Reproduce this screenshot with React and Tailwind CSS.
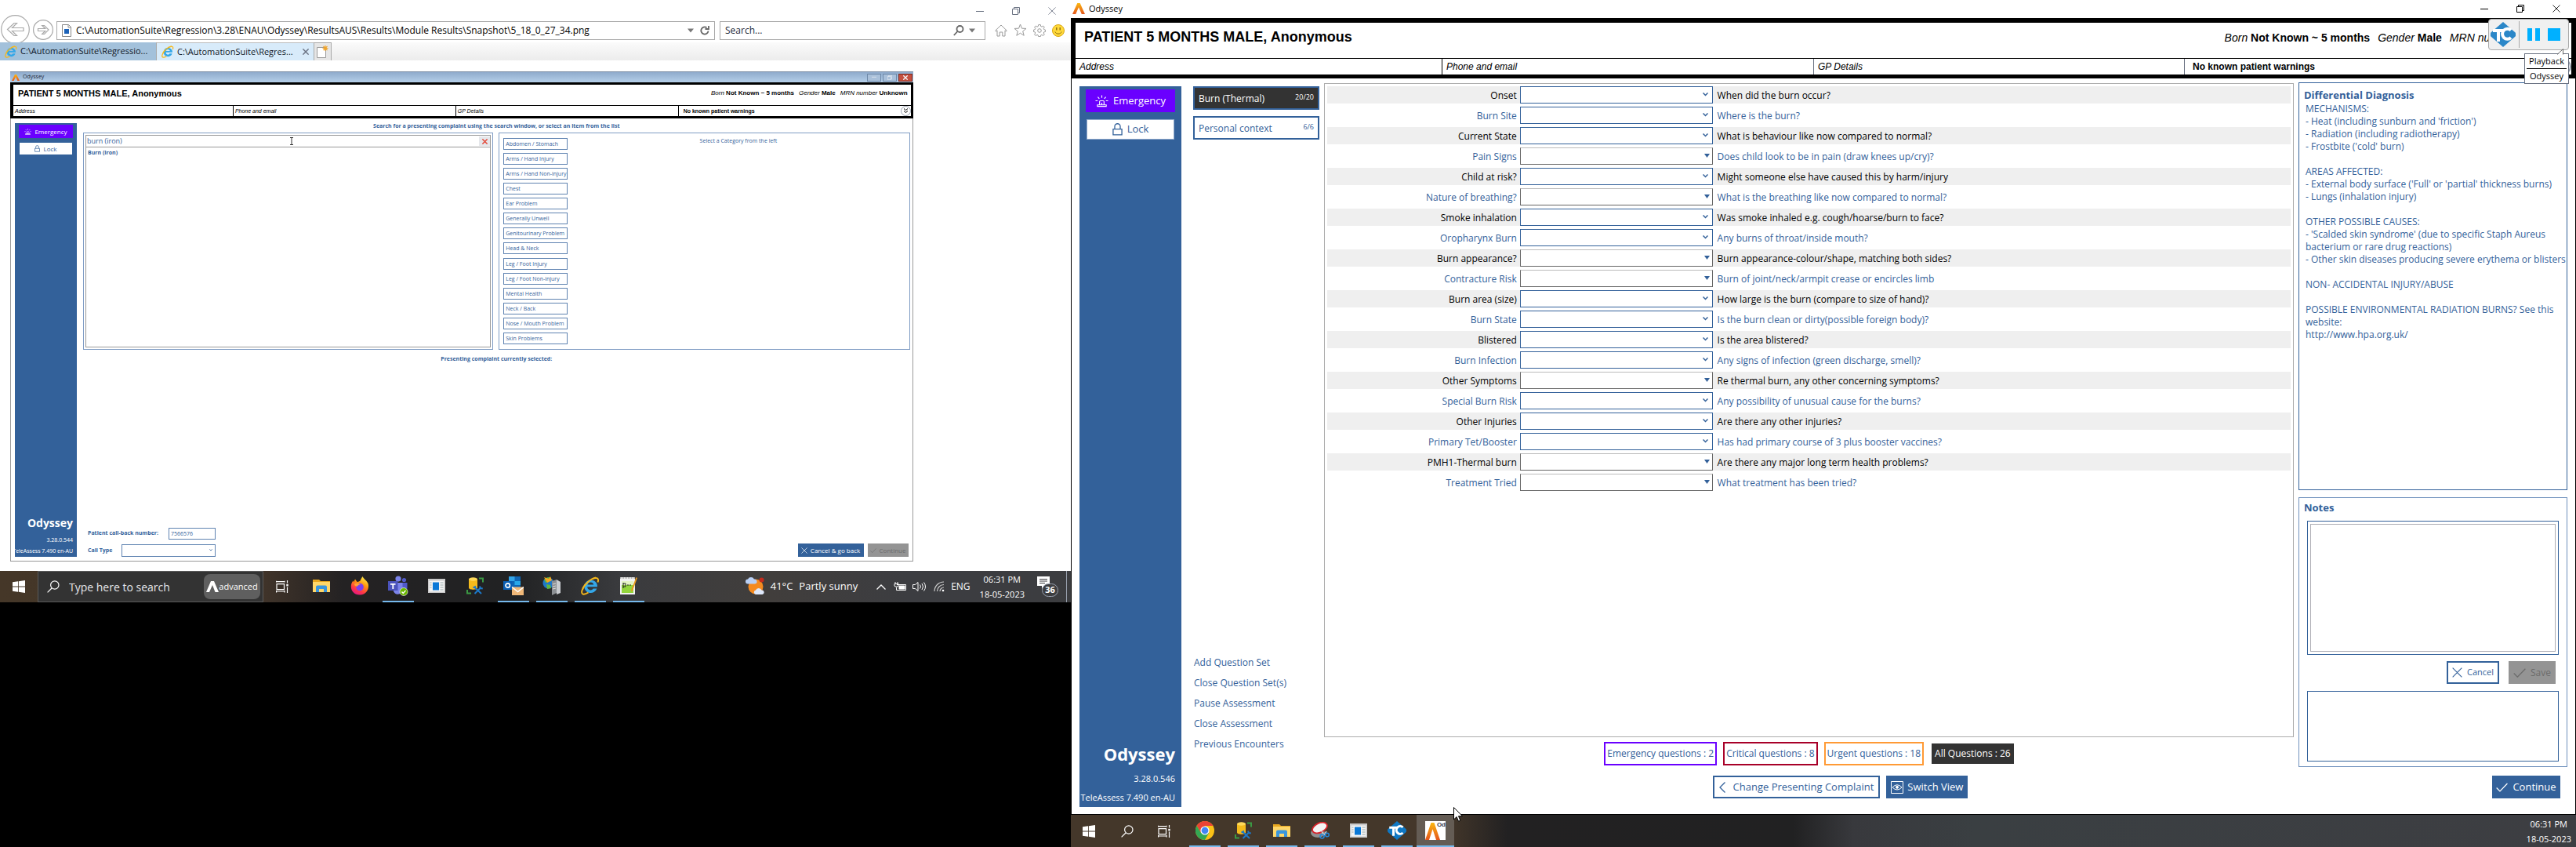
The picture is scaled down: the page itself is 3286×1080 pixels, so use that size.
import React from "react";

const UI = "font-['Open_Sans','Noto_Sans',sans-serif]";
const ARIAL = "font-['Liberation_Sans',Arial,sans-serif]";

/* ---------- icons ---------- */
function Flame({ className }) {
  return (
    <svg className={className} viewBox="0 0 16 14" preserveAspectRatio="none" aria-hidden="true">
      <defs>
        <linearGradient id="flame" x1="0" y1="0" x2="0" y2="1">
          <stop offset="0" stopColor="#fbb811" />
          <stop offset="1" stopColor="#e4551c" />
        </linearGradient>
      </defs>
      <path d="M6.3 0h3.4L16 14h-4.2L8 5.2 4.2 14H0z" fill="url(#flame)" />
    </svg>
  );
}
function Siren({ className }) {
  return (
    <svg className={className} viewBox="0 0 18 16" fill="none" stroke="currentColor" strokeWidth="1.2" aria-hidden="true">
      <path d="M6 13V8.5a1 1 0 0 1 1-1h4a1 1 0 0 1 1 1V13M3 15v-2h12v2zM9 0v3.5M3.6 2.2l2 2.4M14.4 2.2l-2 2.4M.5 7.5h3M14.5 7.5h3M9 10v3" />
    </svg>
  );
}
function LockIcon({ className }) {
  return (
    <svg className={className} viewBox="0 0 14 17" fill="none" stroke="currentColor" strokeWidth="1.4" aria-hidden="true">
      <path d="M1 8h12v8H1zM3.2 8V4.5a3.8 3.8 0 0 1 7.6 0V8" />
    </svg>
  );
}
function Cross({ className, sw = 1.2 }) {
  return (
    <svg className={className} viewBox="0 0 14 14" fill="none" stroke="currentColor" strokeWidth={sw} aria-hidden="true">
      <path d="M.7.7l12.6 12.6M13.3.7L.7 13.3" />
    </svg>
  );
}
function Tick({ className }) {
  return (
    <svg className={className} viewBox="0 0 16 12" fill="none" stroke="currentColor" strokeWidth="1.3" aria-hidden="true">
      <path d="M.7 6.5l4.6 4.7L15.4.7" />
    </svg>
  );
}
function Minimize({ className }) {
  return (
    <svg className={className} viewBox="0 0 10 10" stroke="currentColor" aria-hidden="true"><path d="M0 5.5h10" /></svg>
  );
}
function Restore({ className }) {
  return (
    <svg className={className} viewBox="0 0 10 10" fill="none" stroke="currentColor" aria-hidden="true">
      <path d="M.5 2.5h7v7h-7zM2.5 2.5v-2h7v7h-2" />
    </svg>
  );
}
function Windows() {
  return (
    <svg className="size-4" viewBox="0 0 16 16" fill="#fff" aria-hidden="true">
      <path d="M0 2.2l7-.9v6.3H0zM7.8 1.2L16 0v7.6H7.8zM0 8.4h7v6.3l-7-.9zM7.8 8.4H16V16l-8.2-1.2z" />
    </svg>
  );
}
function Magnifier() {
  return (
    <svg className="size-4" viewBox="0 0 16 16" fill="none" stroke="#fff" strokeWidth="1.2" aria-hidden="true">
      <circle cx="9.8" cy="6" r="5.2" /><path d="M6 10L.6 15.4" />
    </svg>
  );
}
function TaskView() {
  return (
    <svg className="size-4" viewBox="0 0 16 16" fill="none" stroke="#fff" strokeWidth="1.2" aria-hidden="true">
      <path d="M1 4.6h9.5v7H1zM.6 2.4V.8M.6 1.6h10.4M11 2.4V.8M.6 14h10.4M.6 13v2.4M11 13v2.4M14.5 0v3.5M14.5 8.5V16" />
      <path d="M13.3 4.8h2.4v2.6h-2.4z" fill="#fff" stroke="none" />
    </svg>
  );
}
function FolderIcon() {
  return (
    <svg className="h-5 w-6" viewBox="0 0 24 20" aria-hidden="true">
      <path d="M1 2h8l2 2h12v14H1z" fill="#e9a820" />
      <path d="M1 5h22v13H1z" fill="#ffd76a" />
      <path d="M5 18v-6.5a2 2 0 0 1 2-2h10a2 2 0 0 1 2 2V18h-4v-4H9v4z" fill="#3a96dd" />
    </svg>
  );
}
function FirefoxIcon() {
  return (
    <svg className="size-6" viewBox="0 0 24 24" aria-hidden="true">
      <defs>
        <linearGradient id="ff" x1="0.8" y1="0" x2="0.3" y2="1">
          <stop offset="0" stopColor="#fff44f" /><stop offset=".4" stopColor="#ff980e" />
          <stop offset=".75" stopColor="#ff3647" /><stop offset="1" stopColor="#e31587" />
        </linearGradient>
      </defs>
      <path d="M15.500 0c1 3 5 5 6.800 8.500 2.200 5-.5 15-10.300 15C5 23.500.8 18.500.8 13c0-3.500 1-5.500 2.700-7.500l.7 1.800L6 3.500 8.500 7c2-.2 3-.6 4-1.500C13.500 3.500 14 2 15.500 0z" fill="url(#ff)" />
      <circle cx="12" cy="13.500" r="4.800" fill="#7a3ff0" />
      <path d="M5 9.500c3-1.500 5.500-.5 8 .8-2 0-3.500 1-4.500 2.400-2 0-3.500-1-3.500-3.200z" fill="#ffa436" />
    </svg>
  );
}
function TeamsIcon() {
  return (
    <svg className="size-[26px]" viewBox="0 0 26 26" aria-hidden="true">
      <circle cx="13" cy="4" r="3.600" fill="#7b83eb" /><circle cx="20.500" cy="5.500" r="2.600" fill="#5059c9" />
      <path d="M16 9h8.500v7a5 5 0 0 1-8.500 3z" fill="#5059c9" />
      <path d="M7 9h11.500v9a6 6 0 0 1-11.500 2z" fill="#7b83eb" />
      <path d="M0 7h12.500v12H0z" fill="#4b53bc" /><path d="M3 10h6.500v1.700H7.200V17H5.400v-5.300H3z" fill="#fff" />
      <circle cx="20" cy="20.500" r="5" fill="#6bb700" stroke="#fff" strokeWidth=".6" />
      <path d="M17.500 20.600l1.800 1.900 3.200-3.600" stroke="#fff" strokeWidth="1.400" fill="none" />
    </svg>
  );
}
function AppWindowIcon() {
  return (
    <svg className="h-[18px] w-[22px]" viewBox="0 0 22 18" aria-hidden="true">
      <path d="M0 0h22v18H0z" fill="#c9c9c9" /><path d="M1.500 2.500h19v14h-19z" fill="#f4f4f4" />
      <path d="M6 4.500h8v10H6z" fill="#0a78d7" />
      <path d="M15.500 5h4M15.500 8h4M15.500 11h4M15.500 14h4M2.500 5h2M2.500 8h2M2.500 11h2" stroke="#9aa" />
    </svg>
  );
}
function ToolsIcon() {
  return (
    <svg className="size-[22px]" viewBox="0 0 22 22" aria-hidden="true">
      <path d="M3 2.500v11c0 3 11 3 11 0v-11z" fill="#f4bb1c" /><ellipse cx="8.500" cy="2.500" rx="5.500" ry="2.200" fill="#ffd95a" />
      <path d="M16 1.500h5v5M1 16v4.500h5" fill="none" stroke="#3b9a44" strokeWidth="2" />
      <path d="M10 12.500l9 8.500M18.500 13L10.500 21M8.500 13.500l3.500-2M17 11.500l1 2.500 2.800.5" stroke="#1c78c8" strokeWidth="2" fill="none" />
    </svg>
  );
}
function OutlookIcon() {
  return (
    <svg className="h-6 w-[26px]" viewBox="0 0 26 24" aria-hidden="true">
      <path d="M7 0h15v17H7z" fill="#1066b5" /><path d="M7 0h7.500v6H7z" fill="#32a4e8" /><path d="M14.500 6H22v5h-7.500z" fill="#28a8ea" />
      <path d="M0 6h11.500v11H0z" fill="#0a5fb4" /><circle cx="5.700" cy="11.500" r="2.700" fill="none" stroke="#fff" strokeWidth="1.700" />
      <path d="M11 13.500h15V24H11z" fill="#f0b878" /><path d="M11 13.500l7.500 6 7.500-6" fill="none" stroke="#fff" strokeWidth="1.400" />
    </svg>
  );
}
function ServerIcon() {
  return (
    <svg className="size-6" viewBox="0 0 24 24" aria-hidden="true">
      <circle cx="7.500" cy="8.500" r="7" fill="#1f78c9" /><path d="M2 4c3-3 7-4 9-2l-3 5-4 1zM5 10l5 1 1 4-5 1z" fill="#5fb83b" />
      <path d="M2 1l6 2 2-3 2 5-6 3z" fill="#f6a51f" />
      <path d="M12 6l6-2v17l-6 3z" fill="#8c9094" /><path d="M18 4l5 3v14l-5 2z" fill="#c9ccd0" />
      <path d="M13 10l4-1M13 13l4-1M13 16l4-1" stroke="#ddd" />
    </svg>
  );
}
function IeIcon({ className }) {
  return (
    <svg className={className} viewBox="0 0 24 24" aria-hidden="true">
      <path d="M12.500 4.500a8.300 8.300 0 1 0 7.900 11h-4.700a4 4 0 0 1-7.400-2.200H21c.4-5-3.600-8.800-8.500-8.800zM8.500 10.500a4 4 0 0 1 7.800 0z" fill="#34a7e8" />
      <path d="M21.500 7.500C23.500 2 20 .5 14.500 3.500M5.500 10C.5 16.500-.2 22.500 3.500 22.800c2 .1 4-1 6-2.300M2 17C4 10.500 12.500 2.500 19 1.500" fill="none" stroke="#f5b81c" strokeWidth="1.900" />
    </svg>
  );
}
function NotepadIcon() {
  return (
    <svg className="size-6" viewBox="0 0 24 24" aria-hidden="true">
      <path d="M1 1h19v22H1z" fill="#f2f2f2" /><path d="M3 8h15v13H3z" fill="#93d53c" />
      <path d="M3 6h15v5H3z" fill="#e4f4c4" /><path d="M5 8v7M5 9h3v4H5M10 11h2M13 11h2" stroke="#222" fill="none" />
      <path d="M21.500 1l1.500 1-6 16-2 1.500.2-2.500z" fill="#e79a1d" /><path d="M1 2h19" stroke="#777" strokeDasharray="1 1" />
    </svg>
  );
}
function ChromeIcon() {
  return (
    <svg className="size-6" viewBox="0 0 24 24" aria-hidden="true">
      <circle cx="12" cy="12" r="12" fill="#fbc116" />
      <path d="M1.600 6A12 12 0 0 1 22.400 6H12L7 15z" fill="#ea4335" />
      <path d="M1.600 6A12 12 0 0 0 12 24l5.200-9H7z" fill="#34a853" />
      <circle cx="12" cy="12" r="5.600" fill="#fff" /><circle cx="12" cy="12" r="4.400" fill="#4285f4" />
    </svg>
  );
}
function SnipIcon() {
  return (
    <svg className="h-[22px] w-6" viewBox="0 0 24 22" aria-hidden="true">
      <ellipse cx="9" cy="14" rx="9" ry="6" fill="#8f8f8f" />
      <ellipse cx="11.500" cy="7.500" rx="10" ry="6" transform="rotate(-25 11.500 7.500)" fill="#f4f4f4" stroke="#d8232a" strokeWidth="1.800" />
      <path d="M14 12l3 5M20 12l-3 5" stroke="#ccc" strokeWidth="1.500" />
      <circle cx="14.500" cy="18.500" r="2.500" fill="none" stroke="#2787d8" strokeWidth="1.600" /><circle cx="21" cy="16.500" r="2.300" fill="none" stroke="#2787d8" strokeWidth="1.600" />
    </svg>
  );
}
function TcMark({ className, fill = "#0f78c4" }) {
  return (
    <svg className={className} viewBox="0 0 32 32" aria-hidden="true">
      <path d="M16 0l15 13a4 4 0 0 1 0 6L16 32 1 19a4 4 0 0 1 0-6z" fill={fill} />
      <path d="M3 11h13M10 11v14" stroke="#fff" strokeWidth="4" fill="none" />
      <path d="M26 10.500a6.500 6.500 0 1 0 0 9.500" stroke="#fff" strokeWidth="4" fill="none" />
    </svg>
  );
}
function OdTile() {
  return (
    <span className="relative flex h-6 w-[26px] items-end overflow-hidden bg-white">
      <Flame className="h-[22px] w-[19px]" />
      <span className={`${ARIAL} absolute top-0 right-0 text-[8px] leading-[9px] font-bold text-gray-700`}>Od</span>
    </span>
  );
}

/* ---------- shared pieces ---------- */
function TaskButton({ label, children, open = true, active = false, wide = false }) {
  return (
    <button
      type="button"
      aria-label={label}
      className={`flex h-full items-center justify-center border-b-2 ${wide ? "w-12" : "w-10"} ${open ? "border-[#76b9ed]" : "border-transparent"} ${active ? "bg-[#645c54]" : ""}`}
    >
      {children}
    </button>
  );
}
function Chevron({ className }) {
  return (
    <svg className={className} viewBox="0 0 7 5" fill="none" stroke="#33619a" strokeWidth="1.500" aria-hidden="true">
      <path d="M.5.500l3 3 3-3" />
    </svg>
  );
}
function Triangle({ className }) {
  return (
    <svg className={className} viewBox="0 0 7 5" fill="#33619a" aria-hidden="true"><path d="M0 0h7L3.500 5z" /></svg>
  );
}

/* ---------- left screen ---------- */
const categories = [
  "Abdomen / Stomach", "Arms / Hand Injury", "Arms / Hand Non-injury", "Chest", "Ear Problem",
  "Generally Unwell", "Genitourinary Problem", "Head & Neck", "Leg / Foot Injury", "Leg / Foot Non-injury",
  "Mental Health", "Neck / Back", "Nose / Mouth Problem", "Skin Problems",
];

function BrowserChrome() {
  return (
    <div className="bg-white">
      <div className="flex h-[27px] items-center justify-end gap-9 pr-[19px] text-gray-500">
        <button type="button" aria-label="Minimize"><Minimize className="size-2.5" /></button>
        <button type="button" aria-label="Restore"><Restore className="size-2.5" /></button>
        <button type="button" aria-label="Close"><Cross className="size-2.5" /></button>
      </div>
      <div className="flex h-[27px] items-center pr-2">
        <button type="button" aria-label="Back" className="-mt-1.5 ml-px size-[37px] shrink-0">
          <svg viewBox="0 0 37 37" fill="none" stroke="#a9a9a9" strokeWidth="1.200">
            <circle cx="18.500" cy="18.500" r="17.800" />
            <path d="M8.500 18.500l8.500-8h3.500L14.500 16.500H29v4H14.500l6 6H17z" />
          </svg>
        </button>
        <button type="button" aria-label="Forward" className="-mt-1.5 ml-1 size-[26px] shrink-0">
          <svg viewBox="0 0 26 26" fill="none" stroke="#a9a9a9" strokeWidth="1.200">
            <circle cx="13" cy="13" r="12.400" />
            <path d="M20 13l-5.500-5.500h-2.800l4 4H6.500v3h9.200l-4 4h2.800z" />
          </svg>
        </button>
        <div className="-mt-1 ml-1 flex h-6 flex-1 items-center border border-[#a9a9a9] bg-white px-1.5">
          <svg className="h-4 w-3 shrink-0" viewBox="0 0 12 16" aria-hidden="true">
            <path d="M.5.500h8l3 3v12H.500z" fill="#fff" stroke="#888" /><path d="M8 .500V4h3.500" fill="none" stroke="#888" />
            <path d="M3 6h6v6H3z" fill="#1c62b8" />
          </svg>
          <input
            aria-label="Address"
            className={`${UI} ml-1.5 min-w-0 flex-1 text-[12px] text-black outline-none`}
            defaultValue="C:\AutomationSuite\Regression\3.28\ENAU\Odyssey\ResultsAUS\Results\Module Results\Snapshot\5_18_0_27_34.png"
          />
          <svg className="h-1.5 w-2" viewBox="0 0 8 5" fill="#777" aria-hidden="true"><path d="M0 0h8L4 5z" /></svg>
          <svg className="ml-2 size-3" viewBox="0 0 12 12" fill="none" stroke="#666" strokeWidth="1.800" aria-hidden="true">
            <path d="M10.500 6.500A4.600 4.600 0 1 1 8.500 2.200" /><path d="M6.500 4h4.500V0" />
          </svg>
        </div>
        <div className="-mt-1 ml-1.5 flex h-6 w-[339px] shrink-0 items-center border border-[#a9a9a9] bg-white px-1.5">
          <input aria-label="Search" placeholder="Search..." className={`${UI} min-w-0 flex-1 text-[12px] outline-none placeholder:text-gray-800`} />
          <svg className="size-3.5" viewBox="0 0 14 14" fill="none" stroke="#666" strokeWidth="1.800" aria-hidden="true">
            <circle cx="8.500" cy="5" r="4" /><path d="M5.500 8L.8 13" />
          </svg>
          <svg className="mx-1.5 h-1.5 w-2" viewBox="0 0 8 5" fill="#777" aria-hidden="true"><path d="M0 0h8L4 5z" /></svg>
        </div>
        <div className="-mt-1 ml-3 flex shrink-0 items-center gap-2">
          <svg className="size-4" viewBox="0 0 16 16" fill="none" stroke="#999" aria-hidden="true"><path d="M.7 8L8 1l7.300 7-1 1L13 7.800V15H9.800v-5H6.200v5H3V7.800L1.700 9z" /></svg>
          <svg className="size-[17px]" viewBox="0 0 17 17" fill="none" stroke="#999" aria-hidden="true"><path d="M8.500 1l2 5.200 5.500.2-4.300 3.500 1.500 5.400-4.700-3.100-4.700 3.100 1.500-5.400L1 6.400l5.500-.2z" /></svg>
          <svg className="size-4" viewBox="0 0 16 16" fill="none" stroke="#999" aria-hidden="true">
            <circle cx="8" cy="8" r="2.300" />
            <path d="M6.700.600h2.600l.4 2 1.300.6 1.700-1.200 1.500 1.700-1 1.800.6 1.200 1.800.5v2.200l-1.900.5-.5 1.200 1.100 1.800-1.600 1.600-1.800-1.100-1.200.5-.4 1.700H6.700l-.5-1.700-1.200-.5-1.800 1.100-1.600-1.600 1.100-1.800-.5-1.200-1.800-.5V7.200l1.800-.5.6-1.200-1.100-1.800L3.300 2 5 3.200l1.200-.6z" />
          </svg>
          <svg className="size-4" viewBox="0 0 16 16" aria-hidden="true">
            <circle cx="8" cy="8" r="7.500" fill="#ffd93b" stroke="#d9a60f" />
            <path d="M5.800 4v3.500M10.200 4v3.500" stroke="#8a6a10" strokeWidth="1.400" /><path d="M3.800 9.500c1.500 3.500 7 3.500 8.400 0" fill="none" stroke="#8a6a10" />
          </svg>
        </div>
      </div>
      <div className={`${UI} relative flex h-[23px] bg-linear-to-b from-[#fbfbfb] to-[#ececec] text-[11px] whitespace-nowrap text-gray-900`}>
        <button type="button" className="flex w-[200px] items-center gap-1 border-r border-[#aaa] bg-[#a3c1db] pl-1.5">
          <IeIcon className="size-4 shrink-0" /><span>C:\AutomationSuite\Regressio...</span>
        </button>
        <button type="button" className="flex w-[200px] items-center gap-1 border-t border-[#bbb] bg-[#d8ebfa] pl-1.5">
          <IeIcon className="size-4 shrink-0" /><span>C:\AutomationSuite\Regres...</span>
          <Cross className="mr-1.5 ml-auto size-2 shrink-0 text-gray-500" sw={2.5} />
        </button>
        <button type="button" aria-label="New tab" className="flex w-[23px] items-center justify-center border border-b-0 border-[#aaa] bg-[#e6e6e6]">
          <svg className="h-4 w-[15px]" viewBox="0 0 15 16" aria-hidden="true">
            <path d="M.5 2.500h11v13H.500z" fill="#fff" stroke="#999" /><path d="M11 0v7M7.500 3.500h7M8.500 1l5 5M13.500 1l-5 5" stroke="#f0a52c" strokeWidth="1.200" />
          </svg>
        </button>
      </div>
    </div>
  );
}

function SnapshotBanner() {
  return (
    <header className={`${ARIAL} border-[3px] border-l-4 border-black bg-white text-black`}>
      <div className="flex h-[27px] items-center justify-between border-b border-black pr-1 pl-1.5 pb-1">
        <h2 className="text-[11px] font-bold">PATIENT 5 MONTHS MALE, Anonymous</h2>
        <p className="flex gap-1.5 text-[8px]">
          <span><i>Born</i> <b>Not Known ~ 5 months</b></span>
          <span><i>Gender</i> <b>Male</b></span>
          <span><i>MRN number</i> <b>Unknown</b></span>
        </p>
      </div>
      <div className="grid h-[13px] grid-cols-[280fr_284fr_284fr_297fr] text-[7px] leading-[13px]">
        <i className="pl-0.5">Address</i>
        <i className="border-l border-black pl-0.5">Phone and email</i>
        <i className="border-l border-black pl-0.5">GP Details</i>
        <div className="flex items-center justify-between border-l border-black pl-1.5">
          <b>No known patient warnings</b>
          <button type="button" aria-label="Expand warnings" className="flex size-[13px] items-center justify-center rounded-full border border-gray-400">
            <svg className="size-[7px]" viewBox="0 0 7 7" fill="none" stroke="#000" aria-hidden="true"><path d="M1 .500l2.500 2L6 .500M1 3.500l2.500 2 2.500-2" /></svg>
          </button>
        </div>
      </div>
    </header>
  );
}

function Snapshot() {
  return (
    <section className={`${UI} mt-3.5 ml-[13px] flex h-[625px] w-[84.3%] flex-col border border-t-0 border-[#999] bg-white text-[#33619a]`}>
      <div className="-mx-px flex h-3.5 shrink-0 items-center border-t border-[#7d8fa5] bg-linear-to-b from-[#8fabcc] to-[#b5cfe9] pr-px pl-0.5">
        <Flame className="h-2 w-2.5" />
        <span className="ml-1 text-[7px] text-gray-800">Odyssey</span>
        <div className="ml-auto flex gap-0.5 text-gray-100">
          <button type="button" aria-label="Minimize" className="flex h-2.5 w-[18px] items-end justify-center border border-[#6d88a8] bg-[#a9c0da] pb-0.5"><Minimize className="size-1.5" /></button>
          <button type="button" aria-label="Restore" className="flex h-2.5 w-[18px] items-center justify-center border border-[#6d88a8] bg-[#a9c0da]"><Restore className="size-1.5" /></button>
          <button type="button" aria-label="Close" className="flex h-2.5 w-[18px] items-center justify-center border border-[#7c2a22] bg-[#c4503f]"><Cross className="size-1.5" sw={3} /></button>
        </div>
      </div>
      <div className="-mx-px shrink-0"><SnapshotBanner /></div>
      <div className="flex min-h-0 flex-1 pt-1.5 pr-[3px] pb-[5px] pl-[5px]">
        <aside className="flex w-[79px] shrink-0 flex-col bg-[#33619a] px-[5px] pt-0.5 text-white">
          <button type="button" className="flex h-[17px] items-center justify-center gap-1 bg-[#6a00ff] text-[8px]"><Siren className="h-2 w-[9px]" />Emergency</button>
          <button type="button" className="mx-px mt-1.5 flex h-[15px] items-center justify-center gap-1 bg-white text-[8px] text-[#33619a]"><LockIcon className="h-[9px] w-[7px]" />Lock</button>
          <div className="mt-auto flex flex-col items-end whitespace-nowrap">
            <p className="text-[14px] leading-5 font-bold">Odyssey</p>
            <p className="mt-1 text-[7px] leading-[15px]">3.28.0.544</p>
            <p className="text-[7px] leading-[14px]">TeleAssess 7.490 en-AU</p>
          </div>
        </aside>
        <div className="ml-2 flex min-w-0 flex-1 flex-col">
          <p className="-mt-1 text-center text-[7px] leading-4 font-bold">Search for a presenting complaint using the search window, or select an item from the list</p>
          <div className="flex h-[277px] gap-[7px]">
            <div className="flex flex-1 flex-col border border-[#7f9cc4] p-0.5">
              <div className="flex h-4 items-center border border-[#999]">
                <input aria-label="Presenting complaint" defaultValue="burn (iron)" className="min-w-0 flex-1 px-px text-[9px] outline-none" />
                <svg className="mr-[46%] h-2.5 w-1" viewBox="0 0 4 10" fill="none" stroke="#333" aria-hidden="true"><path d="M0 .500h4M2 .500v9M0 9.500h4" /></svg>
                <button type="button" aria-label="Clear" className="flex h-3 w-3.5 items-center justify-center bg-gray-200 text-[#e34a3a]"><Cross className="size-[7px]" sw={3} /></button>
              </div>
              <ul className="flex-1 border border-t-0 border-[#999] px-0.5 pt-0.5 text-[7px] font-bold"><li>Burn (Iron)</li></ul>
            </div>
            <div className="flex flex-1 border border-[#7f9cc4] py-1.5 pl-[5px]">
              <div className="flex w-[82px] flex-col justify-between">
                {categories.map((c) => (
                  <button key={c} type="button" className="h-[15px] border border-[#5f83b1] pl-0.5 text-left text-[7px] leading-[13px] whitespace-nowrap">{c}</button>
                ))}
              </div>
              <p className="-mt-0.5 flex-1 text-center text-[7px] leading-3">Select a Category from the left</p>
            </div>
          </div>
          <p className="mt-1 text-center text-[7px] leading-4 font-bold">Presenting complaint currently selected:</p>
          <div className="mt-auto flex items-end justify-between pl-1.5 text-[7px]">
            <div className="w-[163px] font-bold">
              <div className="flex items-center justify-between">
                <label htmlFor="callback">Patient call-back number:</label>
                <input id="callback" defaultValue="7566576" className="h-[15px] w-[60px] border border-[#5f83b1] px-0.5 font-normal" />
              </div>
              <div className="relative mt-1.5 flex items-center justify-between">
                <label htmlFor="calltype">Call Type</label>
                <select id="calltype" className="h-4 w-[120px] appearance-none border border-[#5f83b1]" />
                <Chevron className="pointer-events-none absolute top-1.5 right-1 h-[3px] w-1" />
              </div>
            </div>
            <div className="flex gap-[5px] pr-0.5 text-[8px] text-white">
              <button type="button" className="flex h-[17px] w-[84px] items-center justify-center gap-1 bg-[#33619a] whitespace-nowrap"><Cross className="size-2" />Cancel &amp; go back</button>
              <button type="button" disabled className="flex h-[17px] w-[52px] items-center justify-center gap-1 bg-[#949494] text-[#6c6c6c]"><Tick className="h-1.5 w-2" />Continue</button>
            </div>
          </div>
        </div>
      </div>
    </section>
  );
}

function LeftTaskbar() {
  return (
    <nav aria-label="Taskbar" className={`${UI} flex h-10 items-center bg-[linear-gradient(90deg,#453728_0%,#42352a_24%,#242223_32%,#212223_48%,#3a3b3e_58%,#413e3c_72%,#3c3d41_85%,#3c3d40_100%)] text-white`}>
      <button type="button" aria-label="Start" className="flex h-full w-12 shrink-0 items-center justify-center"><Windows /></button>
      <div className="flex h-full w-72 shrink-0 items-center border border-[#5a5a5a] bg-[#333] pr-[3px] pl-[11px]">
        <Magnifier />
        <input aria-label="Search" placeholder="Type here to search" className="ml-3 min-w-0 flex-1 text-[14px] outline-none placeholder:text-gray-200" />
        <span className="flex h-8 w-[72px] items-center justify-center rounded-lg bg-[#5f5f5f] text-[11px]">
          <svg className="h-3.5 w-4 shrink-0" viewBox="0 0 16 14" fill="#fff" aria-hidden="true"><path d="M6 0h4l6 14h-4.500L8 5 4 14H0z" /></svg>
          advanced
        </span>
      </div>
      <button type="button" aria-label="Task view" className="ml-4 shrink-0"><TaskView /></button>
      <div className="ml-[22px] flex h-full shrink-0 gap-[9px]">
        <TaskButton label="File Explorer" open={false}><FolderIcon /></TaskButton>
        <TaskButton label="Firefox" open={false}><FirefoxIcon /></TaskButton>
        <TaskButton label="Teams"><TeamsIcon /></TaskButton>
        <TaskButton label="Remote app" open={false}><AppWindowIcon /></TaskButton>
        <TaskButton label="Database tools" open={false}><ToolsIcon /></TaskButton>
        <TaskButton label="Outlook"><OutlookIcon /></TaskButton>
        <TaskButton label="Internet Information Services"><ServerIcon /></TaskButton>
        <TaskButton label="Internet Explorer"><IeIcon className="size-6" /></TaskButton>
        <TaskButton label="Notepad++"><NotepadIcon /></TaskButton>
      </div>
      <div className="ml-auto flex h-full shrink-0 items-center text-[13px]">
        <svg className="size-6" viewBox="0 0 24 24" aria-hidden="true">
          <circle cx="13" cy="12" r="9.500" fill="#f58a1f" /><circle cx="20.500" cy="3.500" r="3" fill="#c42b1c" />
          <path d="M3 8.500a3 3 0 0 1 0-6 4.500 4.500 0 0 1 8 0 3 3 0 0 1 1 6z" fill="#b9d0f5" /><path d="M13 22a2.800 2.800 0 0 1 0-5.500 4 4 0 0 1 7.500 0 2.800 2.800 0 0 1 1 5.500z" fill="#dfe9fb" />
        </svg>
        <span className="ml-2">41°C</span><span className="ml-2">Partly sunny</span>
        <svg className="ml-6 h-[7px] w-3" viewBox="0 0 12 7" fill="none" stroke="#fff" strokeWidth="1.300" aria-hidden="true"><path d="M.5 6.500L6 1l5.500 5.500" /></svg>
        <svg className="ml-2.5 h-3 w-4" viewBox="0 0 16 12" fill="none" stroke="#fff" aria-hidden="true"><path d="M4 3.500h11.500v7H3.500V7M2 0v2M5 0v2M1 2.500h5V5L5 6H2L1 5z" /><path d="M7 5h7v4H7z" fill="#fff" /></svg>
        <svg className="ml-2 h-3.5 w-[17px]" viewBox="0 0 17 14" fill="none" stroke="#fff" aria-hidden="true"><path d="M.5 4.500h3L7 1.500v11l-3.500-3h-3zM9.500 4.500q2 2.500 0 5M12 3q3 4 0 8M14.500 1.500q4 5.500 0 11" /></svg>
        <svg className="ml-2.5 h-3.5 w-3.5" viewBox="0 0 14 14" fill="none" stroke="#ccc" strokeWidth="1.200" aria-hidden="true"><path d="M1 13A12 12 0 0 1 13 1M4.500 13A8.500 8.500 0 0 1 13 4.500M8 13a5 5 0 0 1 5-5" /><circle cx="12" cy="12" r="1.300" fill="#fff" stroke="none" /></svg>
        <span className="ml-2 text-[12px]">ENG</span>
        <p className="ml-3 text-center text-[11px] leading-[19px]">06:31 PM<br />18-05-2023</p>
        <span className="relative ml-4 h-[26px] w-[27px]">
          <svg className="h-4 w-4" viewBox="0 0 16 16" aria-hidden="true"><path d="M0 0h16v12H9l-3 4v-4H0z" fill="#fff" /><path d="M3 3.500h10M3 6h10M3 8.500h7" stroke="#3c3d40" /></svg>
          <span className="absolute right-0 bottom-0 flex h-[17px] w-[21px] items-center justify-center rounded-full border border-gray-400 bg-[#3c3d40] text-[11px] font-bold">36</span>
        </span>
        <span className="ml-2.5 h-full w-1.5 border-l border-gray-400" />
      </div>
    </nav>
  );
}

/* ---------- right screen ---------- */
const questions = [
  ["Onset", "When did the burn occur?"],
  ["Burn Site", "Where is the burn?"],
  ["Current State", "What is behaviour like now compared to normal?"],
  ["Pain Signs", "Does child look to be in pain (draw knees up/cry)?", true],
  ["Child at risk?", "Might someone else have caused this by harm/injury"],
  ["Nature of breathing?", "What is the breathing like now compared to normal?", true],
  ["Smoke inhalation", "Was smoke inhaled e.g. cough/hoarse/burn to face?"],
  ["Oropharynx Burn", "Any burns of throat/inside mouth?"],
  ["Burn appearance?", "Burn appearance-colour/shape, matching both sides?", true],
  ["Contracture Risk", "Burn of joint/neck/armpit crease or encircles limb", true],
  ["Burn area (size)", "How large is the burn (compare to size of hand)?"],
  ["Burn State", "Is the burn clean or dirty(possible foreign body)?"],
  ["Blistered", "Is the area blistered?"],
  ["Burn Infection", "Any signs of infection (green discharge, smell)?"],
  ["Other Symptoms", "Re thermal burn, any other concerning symptoms?", true],
  ["Special Burn Risk", "Any possibility of unusual cause for the burns?"],
  ["Other Injuries", "Are there any other injuries?"],
  ["Primary Tet/Booster", "Has had primary course of 3 plus booster vaccines?"],
  ["PMH1-Thermal burn", "Are there any major long term health problems?", true],
  ["Treatment Tried", "What treatment has been tried?", true],
];

function QuestionRow({ index, label, text, multi }) {
  const id = `q${index}`;
  const shade = index % 2 === 0 ? "bg-[#efefef] text-black" : "text-[#33619a]";
  return (
    <li className={`grid h-[22px] grid-cols-[1fr_1fr_3fr] items-center ${shade}`}>
      <label htmlFor={id} className="pt-0.5 pr-1 text-right">{label}</label>
      <span className="relative">
        <select id={id} className={`block h-[22px] w-full appearance-none border bg-white ${multi ? "border-[#666] border-t-[#bbb]" : "border-[#33619a]"}`} />
        {multi ? <Triangle className="pointer-events-none absolute top-2 right-1 h-[5px] w-[7px]" /> : <Chevron className="pointer-events-none absolute top-2 right-1.5 h-[5px] w-[7px]" />}
      </span>
      <span className="pt-0.5 pl-1.5">{text}</span>
    </li>
  );
}

function PatientBanner() {
  return (
    <header className={`${ARIAL} h-[77px] shrink-0 border-[6px] border-b-[5px] border-black bg-white text-black`}>
      <div className="flex h-[46px] items-start justify-between border-b border-black pt-1.5 pr-[5px] pl-[11px]">
        <h1 className="text-[18px] leading-6 font-bold">PATIENT 5 MONTHS MALE, Anonymous</h1>
        <p className="flex gap-2.5 text-[14px] leading-[26px]">
          <span><i>Born</i> <b>Not Known ~ 5 months</b></span>
          <span><i>Gender</i> <b>Male</b></span>
          <span><i>MRN number</i> <b>Unknown</b></span>
        </p>
      </div>
      <div className="grid h-5 grid-cols-[467fr_474fr_473fr_494fr] text-[12px] leading-5">
        <i className="pl-[5px]">Address</i>
        <i className="border-l border-black pl-[5px]">Phone and email</i>
        <i className="border-l border-gray-500 pl-[5px]">GP Details</i>
        <div className="flex justify-between border-l border-gray-500 pl-2.5">
          <b>No known patient warnings</b>
          <button type="button" aria-label="Expand warnings" className="size-5 rounded-full border-2 border-gray-400" />
        </div>
      </div>
    </header>
  );
}

function PlaybackOverlay() {
  return (
    <div className="absolute top-6 right-[9px] w-[103px]">
      <div className="flex h-10 items-center rounded border border-[#aaa] bg-[#f0f0f0] pl-0.5">
        <TcMark className="size-8" fill="#2b87c8" />
        <span className="ml-1 h-[34px] w-px bg-[#aaa]" />
        <button type="button" aria-label="Pause" className="ml-2.5 flex h-4 gap-1"><span className="w-1.5 bg-[#00b0ff]" /><span className="w-1.5 bg-[#00b0ff]" /></button>
        <button type="button" aria-label="Stop" className="ml-2.5 size-4 bg-[#00b0ff]" />
      </div>
      <div className={`${UI} relative mt-1 ml-[46px] border border-gray-500 bg-white px-0.5 text-center text-[11px] leading-[18px] text-black`}>
        <svg className="absolute -top-[7px] right-1 h-2 w-2.5" viewBox="0 0 10 8" aria-hidden="true"><path d="M1 7.500L7.500.500V8z" fill="#fff" /><path d="M0 7.500L7.500.500v7" fill="none" stroke="#666" /></svg>
        <p className="border-b border-black">Playback</p>
        <p>Odyssey</p>
      </div>
    </div>
  );
}

function OdysseyWindow() {
  return (
    <div className="flex min-w-0 flex-1 flex-col bg-white">
      <div className={`${UI} flex h-[23px] shrink-0 items-center pr-5 pb-0.5 pl-0.5 text-black`}>
        <Flame className="h-3.5 w-4" />
        <span className="ml-[5px] pt-0.5 text-[11px]">Odyssey</span>
        <div className="ml-auto flex gap-9">
          <button type="button" aria-label="Minimize"><Minimize className="size-2.5" /></button>
          <button type="button" aria-label="Restore"><Restore className="size-2.5" /></button>
          <button type="button" aria-label="Close"><Cross className="size-2.5" /></button>
        </div>
      </div>
      <PatientBanner />
      <main className={`${UI} flex min-h-0 flex-1 border-x border-b border-black pr-2.5 pl-2.5 text-[12px] text-[#33619a]`}>
        <aside className="mt-2.5 mb-[9px] flex w-[130px] shrink-0 flex-col bg-[#33619a] px-2 pt-1 text-white">
          <button type="button" className="flex h-[29px] items-center justify-center gap-1.5 bg-[#6a00ff] text-[13px]"><Siren className="h-4 w-[17px]" />Emergency</button>
          <button type="button" className="mx-px mt-[9px] flex h-[26px] items-center justify-center gap-1.5 border border-[#8fa9cb] bg-white text-[13px] text-[#33619a]"><LockIcon className="h-4 w-[13px]" />Lock</button>
          <div className="mt-auto flex flex-col items-end whitespace-nowrap">
            <p className="text-[22px] leading-8 font-bold">Odyssey</p>
            <p className="mt-1 text-[11px] leading-6">3.28.0.546</p>
            <p className="text-[11px] leading-6">TeleAssess 7.490 en-AU</p>
          </div>
        </aside>

        <div className="mt-2.5 ml-[15px] flex w-[161px] shrink-0 flex-col pb-[76px]">
          <button type="button" className="flex h-[30px] justify-between border-2 border-[#33619a] bg-[#333] px-[5px] pt-0.5 leading-6 text-white"><span>Burn (Thermal)</span><span className="text-[9px] leading-5">20/20</span></button>
          <button type="button" className="mt-2 flex h-[30px] justify-between border-2 border-[#33619a] px-[5px] pt-0.5 leading-6"><span>Personal context</span><span className="text-[9px] leading-5">6/6</span></button>
          <div className="mt-auto flex flex-col">
            {["Add Question Set", "Close Question Set(s)", "Pause Assessment", "Close Assessment", "Previous Encounters"].map((t) => (
              <a key={t} href="#" className="pl-px leading-[26px]">{t}</a>
            ))}
          </div>
        </div>

        <div className="ml-1.5 flex min-w-0 flex-1 flex-col pt-1.5 pb-5">
          <ul className="flex flex-1 flex-col gap-1 border border-[#acacac] p-[3px]">
            {questions.map(([label, text, multi], i) => (
              <QuestionRow key={label} index={i} label={label} text={text} multi={multi} />
            ))}
          </ul>
          <div className="mt-1.5 flex items-center justify-center gap-2 leading-[26px]">
            <button type="button" className="border-2 border-[#6a00ff] px-0.5">Emergency questions : 2</button>
            <button type="button" className="border-2 border-[#a80028] px-0.5">Critical questions : 8</button>
            <button type="button" className="border-2 border-[#ff9a35] px-0.5">Urgent questions : 18</button>
            <button type="button" className="ml-0.5 bg-[#333] px-1 text-white">All Questions : 26</button>
          </div>
          <div className="mt-[13px] flex justify-center gap-2 pl-20 text-[13px] leading-[25px]">
            <button type="button" className="flex items-center border-2 border-[#33619a] px-1.5">
              <svg className="mr-2.5 h-3.5 w-2" viewBox="0 0 8 14" fill="none" stroke="currentColor" strokeWidth="1.300" aria-hidden="true"><path d="M7.500.500L1 7l6.500 6.500" /></svg>
              Change Presenting Complaint
            </button>
            <button type="button" className="flex items-center gap-[5px] border-2 border-[#33619a] bg-[#33619a] px-1 text-white">
              <svg className="size-4" viewBox="0 0 16 16" fill="none" stroke="currentColor" aria-hidden="true"><path d="M.500.500h15v15H.500zM2 8q6-6.500 12 0-6 6-12 0z" /><circle cx="8" cy="7.800" r="1.500" fill="currentColor" /></svg>
              Switch View
            </button>
          </div>
        </div>

        <div className="ml-1.5 flex w-[343px] shrink-0 flex-col pt-[5px] pb-5">
          <section className="flex-1 border border-[#33619a] px-1.5 pt-[3px]">
            <h2 className="text-[13px] leading-6 font-bold">Differential Diagnosis</h2>
            <div className="-mt-0.5 pl-0.5 leading-4">
              <p>MECHANISMS:</p>
              <p>- Heat (including sunburn and 'friction')</p>
              <p>- Radiation (including radiotherapy)</p>
              <p>- Frostbite ('cold' burn)</p>
              <p className="mt-4">AREAS AFFECTED:</p>
              <p className="whitespace-nowrap">- External body surface ('Full' or 'partial' thickness burns)</p>
              <p>- Lungs (inhalation injury)</p>
              <p className="mt-4">OTHER POSSIBLE CAUSES:</p>
              <p>- 'Scalded skin syndrome' (due to specific Staph Aureus<br />bacterium or rare drug reactions)</p>
              <p className="whitespace-nowrap">- Other skin diseases producing severe erythema or blisters</p>
              <p className="mt-4">NON- ACCIDENTAL INJURY/ABUSE</p>
              <p className="mt-4">POSSIBLE ENVIRONMENTAL RADIATION BURNS? See this<br />website:</p>
              <p>http://www.hpa.org.uk/</p>
            </div>
          </section>
          <section className="mt-[9px] border border-[#6f91bd] px-2.5 pb-1.5">
            <label htmlFor="notes" className="-ml-1 block text-[13px] leading-6 font-bold">Notes</label>
            <div className="mt-[5px] border border-[#33619a] p-[3px]">
              <textarea id="notes" className="block h-[163px] w-full resize-none border border-[#acacb4] bg-white" />
            </div>
            <div className="mt-2 flex justify-end gap-3 pr-1">
              <button type="button" className="flex h-[29px] w-[67px] items-center justify-center gap-1.5 border-2 border-[#33619a] text-[11px]"><Cross className="size-[13px]" />Cancel</button>
              <button type="button" disabled className="flex h-[29px] w-[60px] items-center justify-center gap-1.5 bg-[#949494] text-[#6c6c6c]"><Tick className="h-3 w-4" />Save</button>
            </div>
            <textarea aria-label="Saved notes" readOnly className="mt-[9px] block h-[90px] w-full resize-none border border-[#33619a]" />
          </section>
          <button type="button" className="mt-[11px] mr-[9px] flex h-[29px] w-[87px] items-center justify-center gap-1.5 self-end bg-[#33619a] text-[13px] text-white"><Tick className="h-3 w-[15px]" />Continue</button>
        </div>
      </main>
    </div>
  );
}

function RightTaskbar() {
  return (
    <nav aria-label="Taskbar" className={`${UI} flex h-[41px] shrink-0 items-center bg-[linear-gradient(90deg,#44372a_0%,#44372a_25%,#222122_29%,#212122_48%,#38393d_52%,#3a3f42_60%,#3d3e42_100%)] pr-1.5 text-white`}>
      <button type="button" aria-label="Start" className="ml-[15px]"><Windows /></button>
      <button type="button" aria-label="Search" className="ml-[33px]"><Magnifier /></button>
      <button type="button" aria-label="Task view" className="ml-[31px]"><TaskView /></button>
      <div className="ml-6 flex h-full gap-[9px]">
        <TaskButton label="Chrome"><ChromeIcon /></TaskButton>
        <TaskButton label="Database tools"><ToolsIcon /></TaskButton>
        <TaskButton label="File Explorer"><FolderIcon /></TaskButton>
        <TaskButton label="Snipping Tool"><SnipIcon /></TaskButton>
        <TaskButton label="Remote app"><AppWindowIcon /></TaskButton>
        <TaskButton label="TestComplete"><TcMark className="size-6" /></TaskButton>
      </div>
      <div className="ml-[5px] h-full"><TaskButton label="Odyssey" active wide><OdTile /></TaskButton></div>
      <p className="ml-auto text-center text-[11px] leading-[19px]">06:31 PM<br />18-05-2023</p>
    </nav>
  );
}

export default function App() {
  return (
    <div className="grid min-h-screen grid-cols-[1366fr_1920fr] bg-black">
      <div className="min-w-0">
        <BrowserChrome />
        <div className="bg-white pb-3"><div className="flow-root"><Snapshot /></div></div>
        <LeftTaskbar />
      </div>
      <div className="relative flex min-w-0 flex-col">
        <OdysseyWindow />
        <RightTaskbar />
        <PlaybackOverlay />
        <svg className="absolute bottom-8 left-[488px] h-[19px] w-3" viewBox="0 0 12 19" aria-hidden="true"><path d="M.5.500v15.500l3.600-3.500 2.400 5.700 2.400-1-2.400-5.500h5z" fill="#fff" stroke="#000" /></svg>
      </div>
    </div>
  );
}
